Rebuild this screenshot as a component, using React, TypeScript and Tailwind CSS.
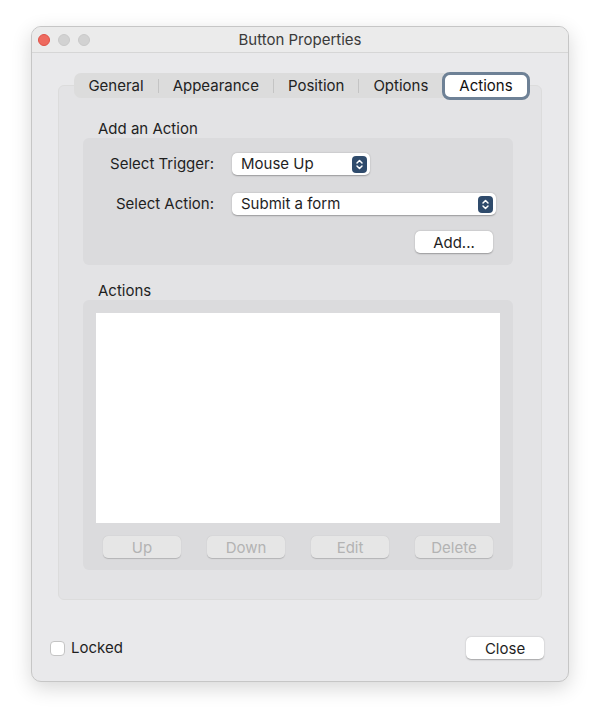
import React from "react";

const Stepper: React.FC = () => (
  <span className="flex h-[17px] w-[15px] items-center justify-center rounded-[4px] bg-[#2f4b6c]">
    <svg width="9" height="13" viewBox="0 0 9 13" fill="none">
      <path d="M2 5 L4.5 2.5 L7 5" stroke="white" strokeWidth="1.5" strokeLinecap="round" strokeLinejoin="round" />
      <path d="M2 8 L4.5 10.5 L7 8" stroke="white" strokeWidth="1.5" strokeLinecap="round" strokeLinejoin="round" />
    </svg>
  </span>
);

const PushButton: React.FC<{ label: string; disabled?: boolean }> = ({ label, disabled }) => (
  <button
    className={
      disabled
        ? "h-[22px] w-[78px] rounded-[5px] bg-[#e6e6e6] text-[15px] leading-none text-[#b3b3b3] shadow-[0_0.5px_1px_rgba(0,0,0,0.18)]"
        : "h-[22px] w-[78px] rounded-[5px] bg-white text-[15px] leading-none text-[#1f1f1f] shadow-[0_0.5px_1.5px_rgba(0,0,0,0.3)]"
    }
  >
    {label}
  </button>
);

export default function App() {
  const tabs = ["General", "Appearance", "Position", "Options"];

  return (
    <div className="h-[719px] w-[600px] bg-white pl-[31px] pt-[26px] font-['Inter',sans-serif] text-[15px] text-[#1f1f1f]">
      <div className="flex h-[656px] w-[538px] flex-col overflow-hidden rounded-[10px] border border-[#c6c6c6] bg-[#e9e9eb] shadow-[0_6px_20px_rgba(0,0,0,0.16)]">
        {/* Title bar */}
        <div className="relative flex h-[26px] shrink-0 items-center gap-[8px] border-b border-[#d6d6d6] bg-[#ebebeb] pl-[6px]">
          <span className="h-[12px] w-[12px] rounded-full border border-[#de5147] bg-[#ee6a5f]" />
          <span className="h-[12px] w-[12px] rounded-full border border-[#c9c9c9] bg-[#d2d2d2]" />
          <span className="h-[12px] w-[12px] rounded-full border border-[#c9c9c9] bg-[#d2d2d2]" />
          <span className="absolute inset-x-0 pt-px text-center text-[15px] text-[#3a3a3a]">Button Properties</span>
        </div>

        {/* Content */}
        <div className="px-[26px] pt-[20px]">
          <div className="relative z-10 -mb-[13px] flex justify-center pl-[4px]">
            <div className="flex h-[25px] items-center rounded-[7px] bg-[#dcdcdc]">
              {tabs.map((t, i) => (
                <React.Fragment key={t}>
                  {i > 0 && <span className="h-[14px] w-px bg-[#c4c4c4]" />}
                  <span className="px-[14px] pt-[2px] text-[#222]">{t}</span>
                </React.Fragment>
              ))}
              <span className="flex h-[28px] items-center rounded-[8px] border-[3px] border-[#6e8196] bg-white px-[14px] pt-[2px] text-[#111]">
                Actions
              </span>
            </div>
          </div>

          <div className="h-[515px] rounded-[6px] border border-[#dcdcdc] bg-[#e3e3e5] pl-[24px] pt-[32px]">
            <div className="pl-[15px] pt-px leading-[20px]">Add an Action</div>
            <div className="-mt-px flex h-[127px] w-[430px] flex-col rounded-[6px] bg-[#dbdbdd] pt-[15px]">
              <div className="flex h-[22px] items-center">
                <span className="w-[131px] pt-px text-right">Select Trigger:</span>
                <div className="ml-[18px] flex h-[22px] w-[138px] items-center justify-between rounded-[5px] bg-white pl-[9px] pr-[3px] shadow-[0_0.5px_1.5px_rgba(0,0,0,0.3)]">
                  <span className="pt-px">Mouse Up</span>
                  <Stepper />
                </div>
              </div>
              <div className="mt-[18px] flex h-[22px] items-center">
                <span className="w-[131px] pt-px text-right">Select Action:</span>
                <div className="ml-[18px] flex h-[22px] w-[264px] items-center justify-between rounded-[5px] bg-white pl-[9px] pr-[3px] shadow-[0_0.5px_1.5px_rgba(0,0,0,0.3)]">
                  <span className="pt-px">Submit a form</span>
                  <Stepper />
                </div>
              </div>
              <div className="mt-[16px] flex justify-end pr-[20px]">
                <PushButton label="Add..." />
              </div>
            </div>

            <div className="mt-[15px] pl-[15px] pt-px leading-[20px]">Actions</div>
            <div className="-mt-px flex h-[270px] w-[430px] flex-col rounded-[6px] bg-[#dbdbdd] px-[13px] pt-[13px]">
              <div className="h-[210px] w-[404px] bg-white" />
              <div className="mt-[13px] flex gap-[26px] pl-[7px]">
                <PushButton label="Up" disabled />
                <PushButton label="Down" disabled />
                <PushButton label="Edit" disabled />
                <PushButton label="Delete" disabled />
              </div>
            </div>
          </div>
        </div>

        {/* Footer */}
        <div className="mt-[37px] flex items-center justify-between pl-[18px] pr-[24px]">
          <label className="flex items-center gap-[6px]">
            <span className="h-[15px] w-[15px] rounded-[4px] border border-[#c4c4c4] bg-white" />
            <span>Locked</span>
          </label>
          <PushButton label="Close" />
        </div>
      </div>
    </div>
  );
}
